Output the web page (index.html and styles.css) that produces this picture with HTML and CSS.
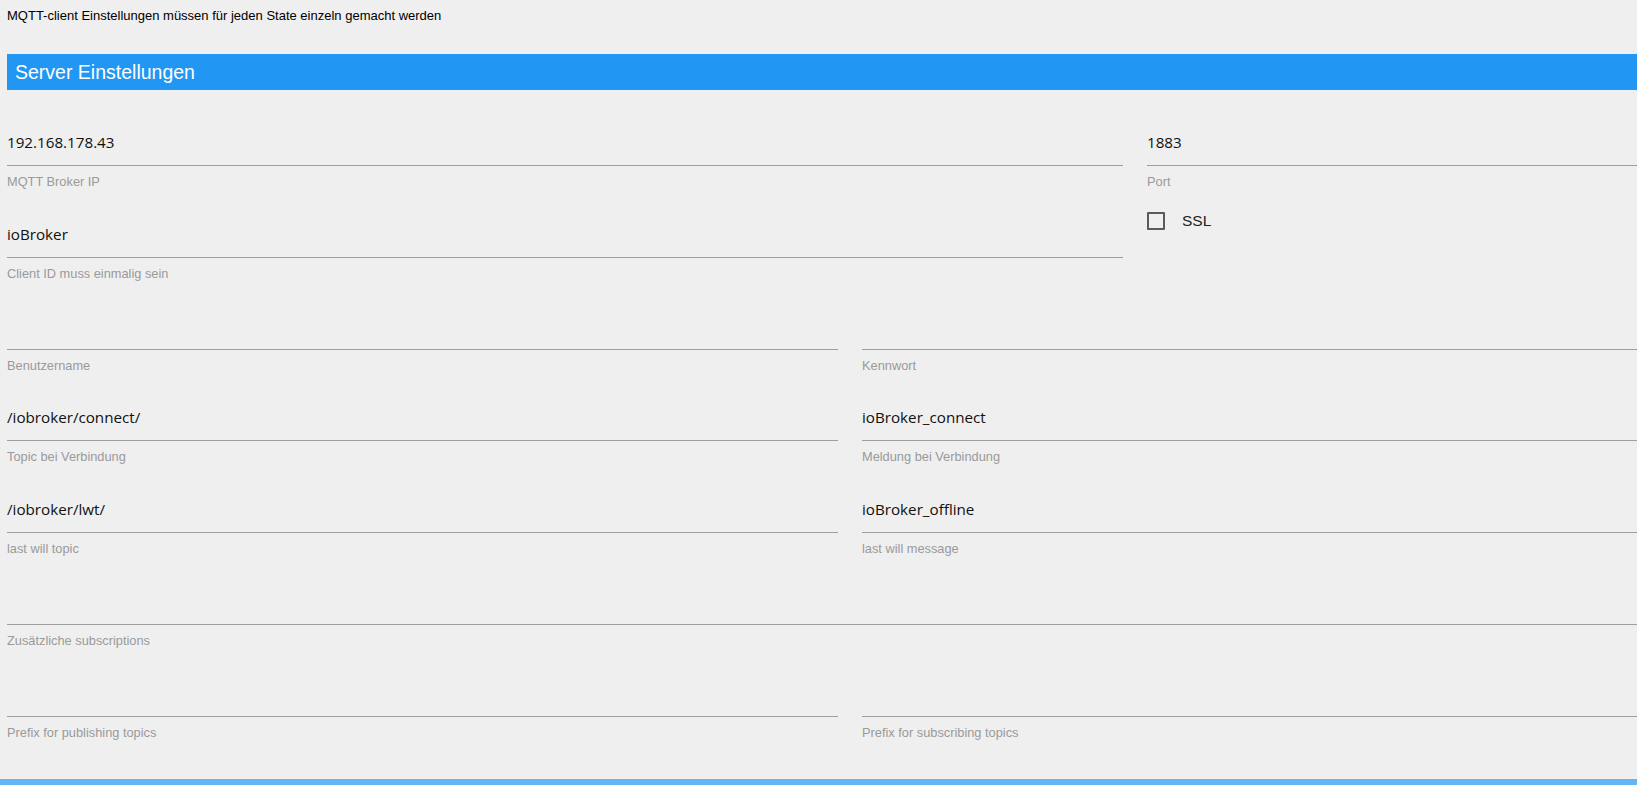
FILE: index.html
```html
<!DOCTYPE html>
<html>
<head>
<meta charset="utf-8">
<title>MQTT-client</title>
<link rel="stylesheet" href="styles.css">
</head>
<body>
<div class="page">
  <p class="intro">MQTT-client Einstellungen müssen für jeden State einzeln gemacht werden</p>
  <div class="section-head">Server Einstellungen</div>

  <div class="row row-8-4">
    <div class="field">
      <div class="input">192.168.178.43</div>
      <div class="label">MQTT Broker IP</div>
    </div>
    <div class="field">
      <div class="input">1883</div>
      <div class="label">Port</div>
    </div>
  </div>

  <div class="row row-8-4">
    <div class="field">
      <div class="input">ioBroker</div>
      <div class="label">Client ID muss einmalig sein</div>
    </div>
    <div class="check">
      <span class="box"></span>
      <span class="check-text">SSL</span>
    </div>
  </div>

  <div class="row row-6-6">
    <div class="field">
      <div class="input"></div>
      <div class="label">Benutzername</div>
    </div>
    <div class="field">
      <div class="input"></div>
      <div class="label">Kennwort</div>
    </div>
  </div>

  <div class="row row-6-6">
    <div class="field">
      <div class="input">/iobroker/connect/</div>
      <div class="label">Topic bei Verbindung</div>
    </div>
    <div class="field">
      <div class="input">ioBroker_connect</div>
      <div class="label">Meldung bei Verbindung</div>
    </div>
  </div>

  <div class="row row-6-6">
    <div class="field">
      <div class="input">/iobroker/lwt/</div>
      <div class="label">last will topic</div>
    </div>
    <div class="field">
      <div class="input">ioBroker_offline</div>
      <div class="label">last will message</div>
    </div>
  </div>

  <div class="row row-12">
    <div class="field">
      <div class="input"></div>
      <div class="label">Zusätzliche subscriptions</div>
    </div>
  </div>

  <div class="row row-6-6">
    <div class="field">
      <div class="input"></div>
      <div class="label">Prefix for publishing topics</div>
    </div>
    <div class="field">
      <div class="input"></div>
      <div class="label">Prefix for subscribing topics</div>
    </div>
  </div>
</div>
<div class="footer-bar"></div>
</body>
</html>
```

FILE: styles.css
```css
html, body {
  margin: 0;
  padding: 0;
  overflow: hidden;
  background: #efefef;
}

.page {
  padding: 8px 0 0 7px;
  width: 1686px;
}

.intro {
  margin: 0;
  font-family: "Liberation Sans", Arial, sans-serif;
  font-size: 13px;
  line-height: 15px;
  color: #000;
}

.section-head {
  margin-top: 31px;
  height: 36px;
  line-height: 36px;
  padding-left: 8px;
  background: #2196f3;
  color: #fff;
  font-family: "Liberation Sans", Arial, sans-serif;
  font-size: 19.5px;
}

.row {
  display: grid;
  column-gap: 24px;
}

.section-head + .row {
  margin-top: 31px;
}

.row-8-4 { grid-template-columns: 1116px 546px; }
.row-6-6 { grid-template-columns: 831px 831px; }
.row-12 { grid-template-columns: 1686px; }

.field {
  height: 91.8px;
}

.input {
  height: 44px;
  line-height: 42px;
  border-bottom: 1px solid #9e9e9e;
  font-family: "Open Sans", "Noto Sans", sans-serif;
  font-size: 15.2px;
  color: #111;
  white-space: nowrap;
}

.label {
  padding-top: 8px;
  line-height: 16px;
  font-family: "Liberation Sans", Arial, sans-serif;
  font-size: 12.8px;
  color: #9a9a9a;
}

.check {
  display: flex;
  align-items: center;
  height: 18px;
  margin-top: -1px;
}

.box {
  width: 14px;
  height: 14px;
  border: 2px solid #5a5a5a;
  border-radius: 1px;
}

.check-text {
  margin-left: 17px;
  font-family: "Liberation Sans", Arial, sans-serif;
  font-size: 15.5px;
  color: #222;
}

.footer-bar {
  margin-top: 15px;
  height: 20px;
  background: #64b5f6;
}
```
